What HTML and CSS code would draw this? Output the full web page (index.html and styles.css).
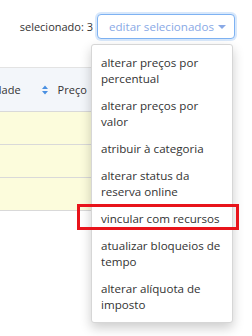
FILE: index.html
```html
<!DOCTYPE html>
<html lang="pt">
<head>
<meta charset="utf-8">
<link rel="stylesheet" href="styles.css">
</head>
<body>
<div class="page">
  <div class="toolbar">
    <span class="count">selecionado: 3</span>
    <div class="dropdown">
      <button class="btn">editar selecionados <span class="caret"></span></button>
      <ul class="menu">
        <li>alterar preços por percentual</li>
        <li>alterar preços por valor</li>
        <li>atribuir à categoria</li>
        <li>alterar status da reserva online</li>
        <li>vincular com recursos</li>
        <li>atualizar bloqueios de tempo</li>
        <li>alterar alíquota de imposto</li>
      </ul>
    </div>
  </div>
  <div class="table-wrap">
    <div class="table">
      <div class="thead">
        <span class="th-qty">Quantidade</span>
        <svg class="sort" width="6" height="10" viewBox="0 0 6 10"><path d="M3 0.5 L6 4 L0 4 Z M0 6 L6 6 L3 9.5 Z" fill="#4a90e2"/></svg>
        <span class="th-price">Preço</span>
      </div>
      <div class="row"></div>
      <div class="row"></div>
      <div class="row"></div>
    </div>
  </div>
  <div class="highlight"></div>
</div>
</body>
</html>
```
FILE: styles.css
```css
* { box-sizing: border-box; }
html, body { margin: 0; padding: 0; background: #fff; }
body {
  font-family: "Open Sans", "DejaVu Sans", sans-serif;
  color: #333;
  width: 252px;
  height: 336px;
  overflow: hidden;
}
.page { position: relative; width: 252px; height: 336px; }
.toolbar {
  display: flex;
  justify-content: flex-end;
  align-items: center;
  gap: 4px;
  padding: 14px 17px 0 0;
  height: 39px;
}
.count { font-size: 11px; color: #333; line-height: 25px; }
.dropdown { position: relative; }
.btn {
  font-family: inherit;
  font-size: 11.6px;
  color: #89a9e6;
  background: #fff;
  border: 1px solid #7eb2f2;
  border-radius: 4px;
  box-shadow: 0 0 0 2px #d8e8fb;
  height: 25px;
  width: 138px;
  padding: 0 8px 0 11px;
  display: flex;
  align-items: center;
  justify-content: space-between;
  white-space: nowrap;
}
.caret {
  display: inline-block;
  width: 0; height: 0;
  border-left: 4px solid transparent;
  border-right: 4px solid transparent;
  border-top: 4px solid #89a9e6;
  margin-left: 4px;
}
.menu {
  position: absolute;
  top: 30px;
  right: 2px;
  width: 142px;
  margin: 0;
  padding: 4px 0;
  list-style: none;
  background: #fff;
  border: 1px solid #d6d6d6;
  border-radius: 3px;
  box-shadow: 0 5px 12px rgba(0,0,0,0.2);
  z-index: 5;
}
.menu li {
  font-size: 11.6px;
  line-height: 16px;
  padding: 5.5px 8px 5.5px 9px;
  color: #333;
}
.table-wrap {
  margin-top: 28px;
  width: 140px;
  overflow: hidden;
}
.table { margin-left: -40px; }
.thead {
  height: 45px;
  background: #f3f6fa;
  border-top: 1px solid #e3e3e3;
  border-bottom: 1px solid #d9d9d9;
  display: flex;
  align-items: center;
  font-size: 11px;
  color: #333;
}
.sort { margin-left: 21px; }
.th-price { margin-left: 10px; }
.row {
  height: 33px;
  background: #fcfcdc;
  border-bottom: 1px solid #d9d9d9;
}
.highlight {
  position: absolute;
  left: 77px;
  top: 204px;
  width: 162px;
  height: 26px;
  border: 3px solid #e8141b;
  z-index: 6;
}
```
